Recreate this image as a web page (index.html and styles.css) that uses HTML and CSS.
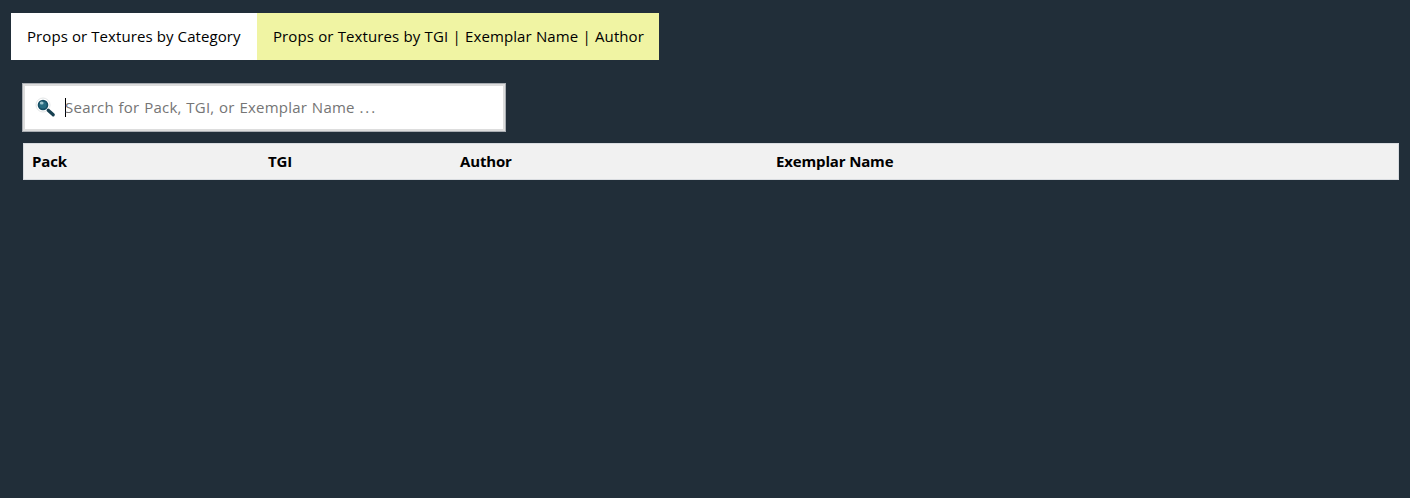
FILE: index.html
```html
<!DOCTYPE html>
<html lang="en">
<head>
<meta charset="utf-8">
<title>Props or Textures</title>
<link rel="stylesheet" href="styles.css">
</head>
<body>
<nav class="tabs">
  <button class="tab tab-category">Props or Textures by Category</button>
  <button class="tab tab-search active">Props or Textures by TGI | Exemplar Name | Author</button>
</nav>
<main class="content">
  <div class="search">
    <svg class="search-icon" viewBox="0 0 22 22" width="22" height="22">
      <circle cx="8" cy="8" r="7" fill="#fff" stroke="#e3e6e7" stroke-width="1"/>
      <path d="M13.2 13.2l5 4.6" stroke="#163f50" stroke-width="3.2" stroke-linecap="round"/>
      <circle cx="8" cy="8" r="5.3" fill="#174f65"/>
      <circle cx="8" cy="8" r="3.6" fill="#266b80"/>
      <ellipse cx="6.7" cy="5.9" rx="1.9" ry="1.5" fill="#9bc3cb"/>
    </svg>
    <span class="caret"></span>
    <span class="placeholder">Search for Pack, TGI, or Exemplar Name <span class="dots">...</span></span>
  </div>
  <table class="packs">
    <tr>
      <th class="col-pack">Pack</th>
      <th class="col-tgi">TGI</th>
      <th class="col-author">Author</th>
      <th class="col-name">Exemplar Name</th>
    </tr>
  </table>
</main>
</body>
</html>
```
FILE: styles.css
```css
* { box-sizing: border-box; }
body {
  margin: 0;
  padding: 13px 11px 0;
  background: #212e39;
  color: #000;
  font: 15px/19px "Trebuchet MS", "Open Sans", "Noto Sans", sans-serif;
}
.tabs { display: flex; height: 47px; }
.tab {
  border: 0;
  padding: 0 0 0 16px;
  background: #fff;
  color: #000;
  font: inherit;
  text-align: left;
  white-space: nowrap;
}
.tab-category { width: 246px; letter-spacing: 0.09px; }
.tab-search { width: 402px; letter-spacing: 0.09px; word-spacing: 0.25px; }
.tab.active { background: #f0f4a3; }
.content { padding: 23px 0 0 11px; }
.search {
  display: flex;
  align-items: center;
  width: 484px;
  height: 49px;
  padding-left: 12px;
  border: 1px solid #a9adb2;
  background: #fff;
  box-shadow: inset 0 0 0 2px #ddd;
  color: #757575;
  white-space: nowrap;
}
.search-icon { flex: none; margin-top: 1px; }
.caret { width: 1px; height: 19px; margin-left: 8px; background: #000; }
.placeholder { margin-left: -1px; letter-spacing: 0.24px; word-spacing: 0.5px; }
.dots { letter-spacing: 2px; }
.packs {
  width: 1376px;
  height: 37px;
  margin: 11px 0 0 1px;
  border: 1px solid #d9dce0;
  border-collapse: separate;
  border-spacing: 0;
  table-layout: fixed;
  background: #f1f1f1;
}
.packs th {
  padding: 0 0 0 8px;
  text-align: left;
  font-weight: 700;
  letter-spacing: -0.15px;
}
.col-pack { width: 236px; }
.col-tgi { width: 192px; }
.col-author { width: 316px; }
```
